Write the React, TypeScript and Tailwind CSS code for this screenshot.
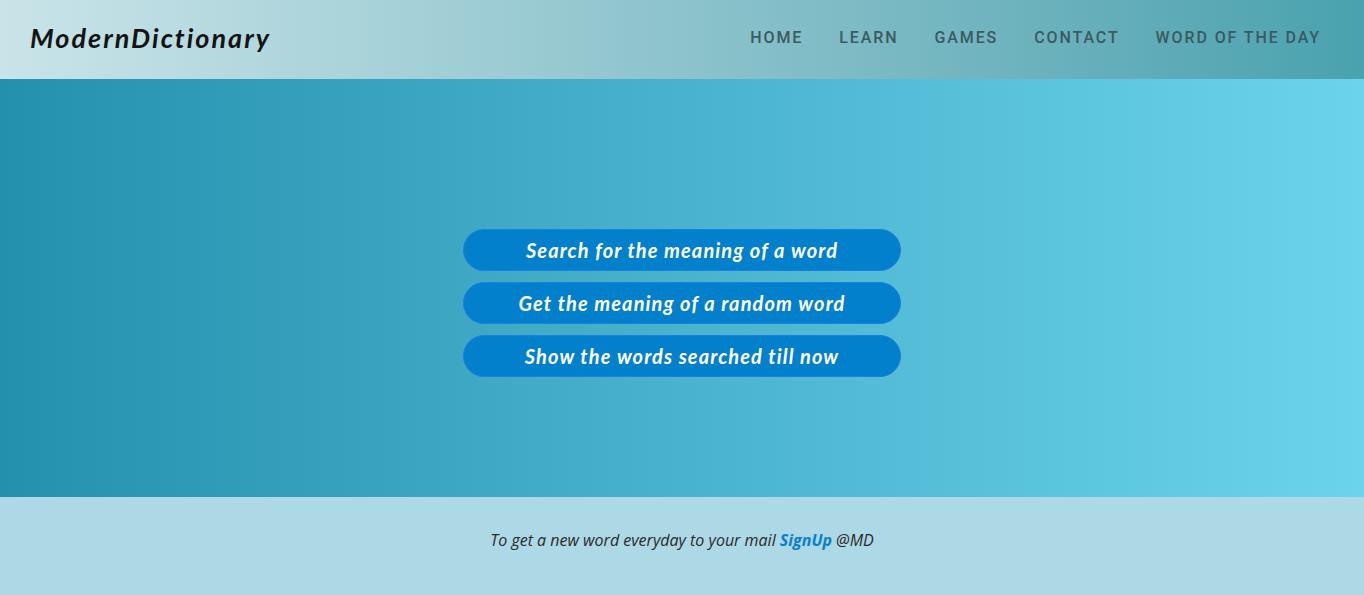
const navItems = ["HOME", "LEARN", "GAMES", "CONTACT", "WORD OF THE DAY"];

const actions = [
  "Search for the meaning of a word",
  "Get the meaning of a random word",
  "Show the words searched till now",
];

const App = () => {
  return (
    <div className="flex min-h-screen flex-col">
      <header className="flex h-[79px] items-center justify-between bg-gradient-to-r from-[#c9e4e9] to-[#49a2af] pb-[3px] pl-[30px] pr-[43px]">
        <h1 className="font-['Lato',sans-serif] text-[27px] font-bold italic tracking-[2px] text-[#141414]">
          ModernDictionary
        </h1>
        <nav className="flex items-center gap-[36px] font-['Roboto',sans-serif] text-[16px] font-medium tracking-[1.9px] text-[#3b5a61]">
          {navItems.map((item) => (
            <a key={item} href="#" className="leading-none">
              {item}
            </a>
          ))}
        </nav>
      </header>

      <main className="flex h-[418px] flex-col items-center justify-center gap-[11px] bg-gradient-to-r from-[#2391ae] to-[#6bd4ec] pt-[29px]">
        {actions.map((label) => (
          <button
            key={label}
            className="h-[42px] w-[438px] rounded-full border border-[#1a7fe6] bg-[#0380cc] font-['Lato',sans-serif] text-[20px] font-bold italic tracking-[1.1px] text-white"
          >
            {label}
          </button>
        ))}
      </main>

      <footer className="flex h-[98px] items-start justify-center bg-[#add8e6] pt-[31px]">
        <p className="font-['Open_Sans',sans-serif] text-[16px] italic text-[#2a2a2a]">
          To get a new word everyday to your mail{" "}
          <a href="#" className="font-bold text-[#0a7fcc]">
            SignUp
          </a>{" "}
          @MD
        </p>
      </footer>
    </div>
  );
};

export default App;
